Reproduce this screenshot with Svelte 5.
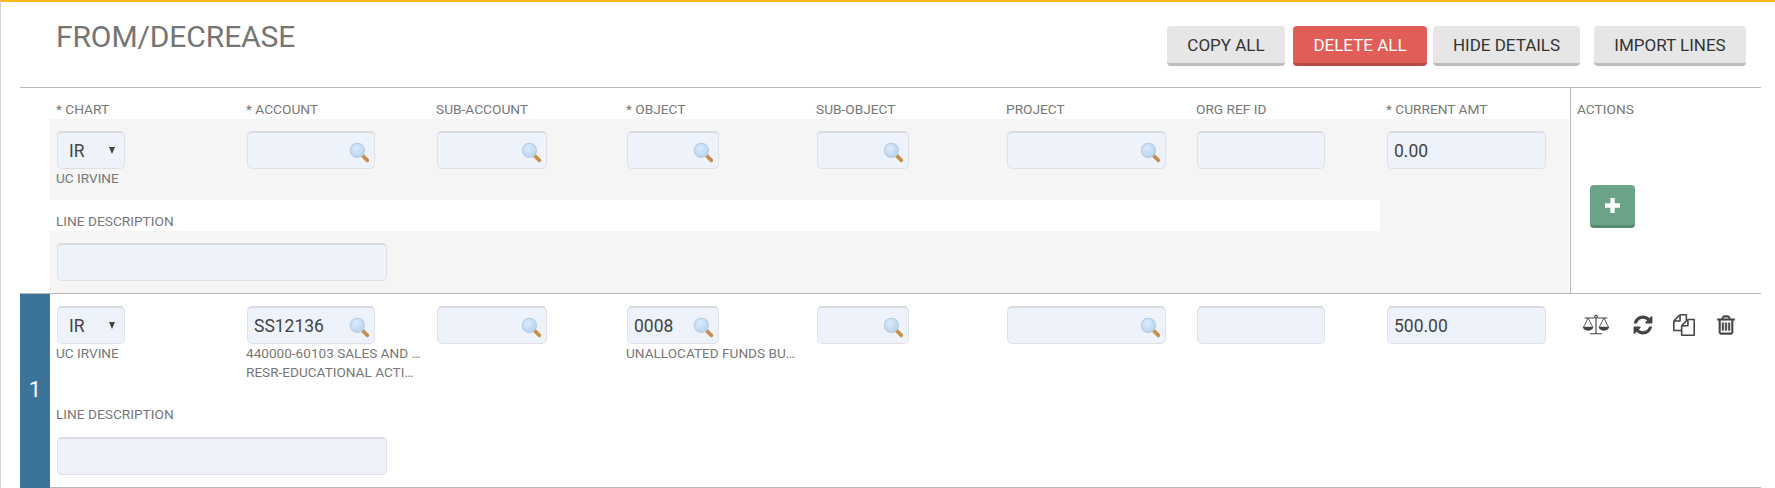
<script>
  const cols = [
    { label: '* CHART', kind: 'select', w: 68 },
    { label: '* ACCOUNT', kind: 'lookup', w: 128 },
    { label: 'SUB-ACCOUNT', kind: 'lookup', w: 110 },
    { label: '* OBJECT', kind: 'lookup', w: 92 },
    { label: 'SUB-OBJECT', kind: 'lookup', w: 92 },
    { label: 'PROJECT', kind: 'lookup', w: 159 },
    { label: 'ORG REF ID', kind: 'text', w: 128 },
    { label: '* CURRENT AMT', kind: 'text', w: 159 }
  ];
  const addValues = ['IR', '', '', '', '', '', '', '0.00'];
  const addNotes = [['UC IRVINE'], [], [], [], [], [], [], []];
  const lineValues = ['IR', 'SS12136', '', '0008', '', '', '', '500.00'];
  const lineNotes = [
    ['UC IRVINE'],
    ['440000-60103 SALES AND SERVICES', 'RESR-EDUCATIONAL ACTIVITIES'],
    [],
    ['UNALLOCATED FUNDS BUDGET'],
    [], [], [], []
  ];
</script>

{#snippet glass()}
  <svg class="glass" viewBox="0 0 20 20" aria-hidden="true">
    <defs>
      <radialGradient id="lens" cx="40%" cy="35%" r="70%">
        <stop offset="0" stop-color="#dcebfa" />
        <stop offset="1" stop-color="#b4d2f0" />
      </radialGradient>
    </defs>
    <path d="M12.500 12.500 L17.500 17.500" stroke="#c98d4a" stroke-width="3.400" stroke-linecap="round" />
    <circle cx="8" cy="8" r="6.800" fill="url(#lens)" stroke="#b4cde2" stroke-width="1" />
  </svg>
{/snippet}

{#snippet fieldRow(values, notes)}
  <div class="fields">
    {#each cols as col, i}
      <div class="col">
        <div class="input" style="width:{col.w}px">
          <span class="value" class:sel={col.kind === 'select'}>{values[i]}</span>
          {#if col.kind === 'select'}<span class="caret"></span>{/if}
          {#if col.kind === 'lookup'}{@render glass()}{/if}
        </div>
        {#each notes[i] as note}
          <div class="note">{note}</div>
        {/each}
      </div>
    {/each}
  </div>
{/snippet}

<div class="page">
  <header class="head">
    <h2>FROM/DECREASE</h2>
    <div class="buttons">
      <button class="btn copy">COPY ALL</button>
      <button class="btn del">DELETE ALL</button>
      <button class="btn hide">HIDE DETAILS</button>
      <button class="btn imp">IMPORT LINES</button>
    </div>
  </header>

  <section class="add">
    <div class="main">
      <div class="labels">
        {#each cols as col}
          <div class="col label">{col.label}</div>
        {/each}
      </div>
      <div class="band">
        {@render fieldRow(addValues, addNotes)}
        <div class="strip"><span class="label">LINE DESCRIPTION</span></div>
        <div class="desc"><div class="input wide"></div></div>
      </div>
    </div>
    <aside class="actions">
      <div class="label">ACTIONS</div>
      <button class="plus" aria-label="Add">
        <svg viewBox="0 0 14 14" width="15" height="15" aria-hidden="true">
          <path d="M5 0h4v5h5v4H9v5H5V9H0V5h5z" fill="#fff" />
        </svg>
      </button>
    </aside>
  </section>

  <section class="line">
    <div class="num">1</div>
    <div class="linebody">
      {@render fieldRow(lineValues, lineNotes)}
      <div class="linedesc"><span class="label">LINE DESCRIPTION</span></div>
      <div class="input wide"></div>
    </div>
    <div class="icons">
      <svg class="scale" viewBox="0 0 32 24" aria-hidden="true">
        <g fill="none" stroke="#444" stroke-width="1.300">
          <circle cx="16" cy="2.600" r="1.600" />
          <path d="M16 4.500V22M9 22h14M3 4h11M18 4h11" />
          <path d="M7 4L2 14M7 4l5 10M25 4l-5 10M25 4l5 10" stroke-width="1" />
        </g>
        <path d="M1 14h12a6 4.500 0 0 1-12 0zM19 14h12a6 4.500 0 0 1-12 0z" fill="#444" />
      </svg>
      <svg class="fa refresh" viewBox="0 0 1792 1792" aria-hidden="true"><path d="M1639 1056q0 5-1 7-64 268-268 434.500t-478 166.500q-146 0-282.500-55t-243.500-157l-129 129q-19 19-45 19t-45-19-19-45v-448q0-26 19-45t45-19h448q26 0 45 19t19 45-19 45l-137 137q71 66 161 102t187 36q134 0 250-65t186-179q11-17 53-117 8-23 30-23h192q13 0 22.500 9.500t9.500 22.500zm25-800v448q0 26-19 45t-45 19h-448q-26 0-45-19t-19-45 19-45l138-138q-148-137-349-137-134 0-250 65t-186 179q-11 17-53 117-8 23-30 23h-199q-13 0-22.500-9.500t-9.500-22.500v-7q65-268 270-434.500t480-166.500q146 0 284 55.500t245 156.500l130-129q19-19 45-19t45 19 19 45z" /></svg>
      <svg class="fa" viewBox="0 0 1792 1792" aria-hidden="true"><path d="M1696 384q40 0 68 28t28 68v1216q0 40-28 68t-68 28h-960q-40 0-68-28t-28-68v-288h-544q-40 0-68-28t-28-68v-672q0-40 20-88t48-76l408-408q28-28 76-48t88-20h416q40 0 68 28t28 68v328q68-40 128-40h416zm-544 213l-299 299h299v-299zm-640-384l-299 299h299v-299zm196 647l316-316v-416h-384v416q0 40-28 68t-68 28h-416v640h512v-256q0-40 20-88t48-76zm956 804v-1152h-384v416q0 40-28 68t-68 28h-416v640h896z" /></svg>
      <svg class="fa trash" viewBox="0 0 1792 1792" aria-hidden="true"><path d="M704 736v576q0 14-9 23t-23 9h-64q-14 0-23-9t-9-23v-576q0-14 9-23t23-9h64q14 0 23 9t9 23zm256 0v576q0 14-9 23t-23 9h-64q-14 0-23-9t-9-23v-576q0-14 9-23t23-9h64q14 0 23 9t9 23zm256 0v576q0 14-9 23t-23 9h-64q-14 0-23-9t-9-23v-576q0-14 9-23t23-9h64q14 0 23 9t9 23zm128 724v-948h-896v948q0 22 7 40.500t14.500 27 10.500 8.500h832q3 0 10.500-8.500t14.500-27 7-40.500zm-672-1076h448l-48-117q-7-9-17-11h-317q-10 2-17 11zm928 32v64q0 14-9 23t-23 9h-96v948q0 83-47 143.500t-113 60.500h-832q-66 0-113-58.500t-47-141.500v-952h-96q-14 0-23-9t-9-23v-64q0-14 9-23t23-9h309l70-167q15-37 54-63t79-26h320q40 0 79 26t54 63l70 167h309q14 0 23 9t9 23z" /></svg>
    </div>
  </section>
</div>

<style>
  :global(body) { margin: 0; background: #fff; }
  .page {
    box-sizing: border-box;
    height: 488px;
    width: 1775px;
    border-top: 2px solid #fdb81e;
    border-left: 1px solid #d4d4d4;
    padding-left: 19px;
    font-family: Roboto, sans-serif;
    color: #444;
    overflow: hidden;
  }
  .head {
    height: 86px;
    display: flex;
    justify-content: space-between;
    width: 1741px;
    box-sizing: border-box;
    border-bottom: 1px solid #b8b8b8;
  }
  h2 {
    margin: 0;
    padding: 17px 0 0 36px;
    font-size: 30px;
    line-height: 36px;
    font-weight: 400;
    letter-spacing: -0.1px;
    color: #757575;
  }
  .buttons { display: flex; padding-top: 24px; height: 40px; }
  .btn {
    box-sizing: border-box;
    height: 40px;
    border: 0;
    border-bottom: 3px solid #bdbdbd;
    border-radius: 4px;
    background: #e6e6e6;
    color: #333;
    font: 400 17px Roboto, sans-serif;
    padding: 0;
  }
  .copy { width: 118px; margin-right: 8px; }
  .del { width: 134px; margin-right: 6px; background: #e05d58; border-bottom-color: #b94a46; color: #fff; }
  .hide { width: 147px; margin-right: 14px; }
  .imp { width: 152px; margin-right: 15px; }

  .label { font-size: 13.700px; line-height: 16px; color: #777; }
  .add { display: flex; height: 205px; width: 1741px; }
  .main { width: 1551px; flex: none; box-sizing: border-box; border-right: 1px solid #b8b8b8; }
  .labels { display: flex; height: 31px; padding: 13px 0 0 36px; box-sizing: border-box; }
  .col { width: 190px; flex: none; min-width: 0; }
  .band { margin-left: 30px; height: 174px; background: #f5f5f5; width: 1519px; }
  .band .fields { height: 81px; padding-top: 12px; box-sizing: border-box; padding-left: 7px; }
  .fields { display: flex; }
  .strip { background: #fff; width: 1330px; height: 31px; padding: 14px 0 0 6px; box-sizing: border-box; }
  .strip .label { display: block; margin-top: -1px; }
  .desc { padding: 12px 0 0 7px; }
  .input {
    box-sizing: border-box;
    height: 38px;
    display: flex;
    align-items: center;
    justify-content: space-between;
    background: #eef2fb;
    border: 1px solid #dfe1e6;
    border-top: 2px solid #d9dbe0;
    border-radius: 5px;
    padding: 0 6px;
    font-size: 17.500px;
    color: #444;
  }
  .wide { width: 330px; }
  .value { flex: 1; }
  .value.sel { padding-left: 5px; }
  .caret {
    width: 0; height: 0;
    border-left: 3.500px solid transparent;
    border-right: 3.500px solid transparent;
    border-top: 7px solid #444;
    margin-right: 3px;
  }
  .glass { width: 21px; height: 21px; flex: none; margin-right: -2px; margin-top: 3px; }
  .note {
    font-size: 13.600px;
    line-height: 19px;
    color: #777;
    width: 176px;
    margin-left: -1px;
    margin-bottom: 0;
    white-space: nowrap;
    overflow: hidden;
    text-overflow: ellipsis;
  }
  .actions { padding: 13px 0 0 6px; flex: 1; box-sizing: border-box; }
  .plus {
    display: flex;
    align-items: center;
    justify-content: center;
    box-sizing: border-box;
    width: 45px;
    height: 43px;
    margin: 68px 0 0 13px;
    padding: 0;
    border: 0;
    border-bottom: 3px solid #568a70;
    border-radius: 4px;
    background: #6ba386;
  }

  .line {
    display: flex;
    width: 1741px;
    height: 195px;
    box-sizing: border-box;
    border-top: 1px solid #b8b8b8;
    border-bottom: 1px solid #b8b8b8;
  }
  .num {
    width: 30px;
    flex: none;
    background: #3b7399;
    color: #fff;
    font-size: 22px;
    display: flex;
    align-items: center;
    justify-content: center;
    padding-bottom: 4px;
    box-sizing: border-box;
    margin-bottom: -1px;
  }
  .linebody { width: 1520px; flex: none; padding: 12px 0 0 7px; box-sizing: border-box; }
  .linebody .fields { height: 91px; }
  .linedesc { height: 40px; padding-top: 7px; margin-left: -1px; box-sizing: border-box; }
  .icons { display: flex; align-items: center; height: 38px; margin-top: 12px; }
  .icons svg { fill: #444; flex: none; }
  .scale { width: 28px; height: 22px; margin-right: 22px; margin-left: 12px; }
  .fa { width: 22px; height: 22px; margin-right: 20px; }
  .refresh { width: 22px; height: 22px; margin-right: 19px; }
  .trash { width: 22px; height: 22px; stroke: #444; stroke-width: 40px; }
</style>
